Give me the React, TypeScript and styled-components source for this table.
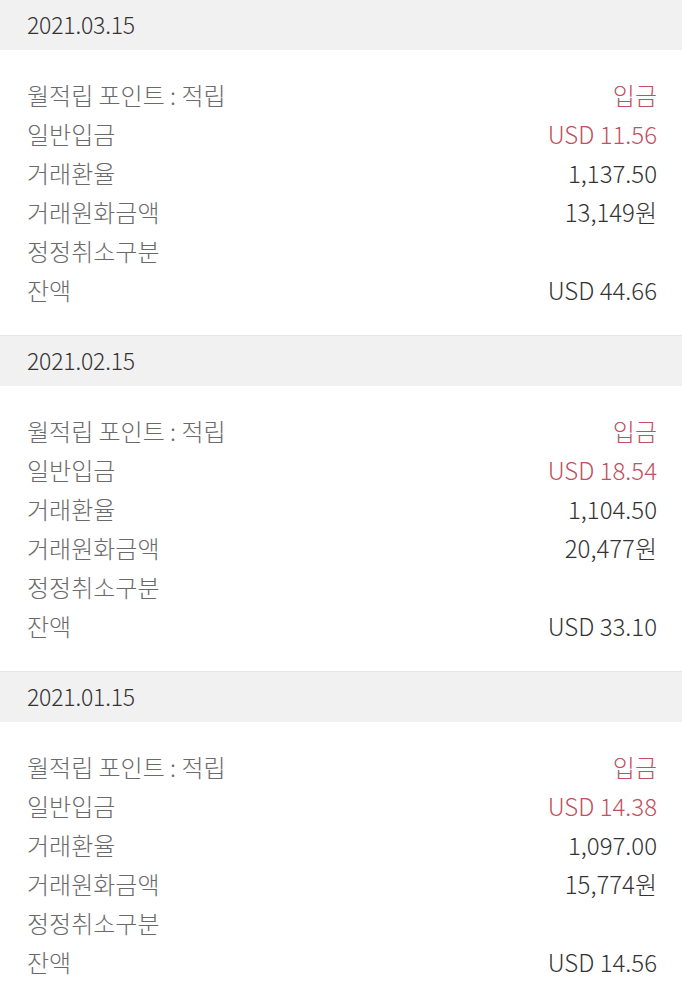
import React from "react";
import styled, { createGlobalStyle } from "styled-components";

const Global = createGlobalStyle`
  html, body { margin: 0; padding: 0; background: #ffffff; }
  body { font-family: "Noto Sans CJK KR", "Noto Sans", sans-serif; -webkit-font-smoothing: antialiased; }
`;

const List = styled.div`
  display: flex;
  flex-direction: column;
`;

const Section = styled.section<{ $first?: boolean }>`
  border-top: ${(p) => (p.$first ? "none" : "1px solid #e6e6e6")};
`;

const DateBar = styled.div`
  height: 50px;
  box-sizing: border-box;
  padding: 0 27px 3px;
  background: #f1f1f1;
  display: flex;
  align-items: center;
  font-size: 23px;
  font-weight: 300;
  color: #333333;
  letter-spacing: -0.2px;
`;

const Body = styled.div`
  padding: 25px 25px 26px 27px;
  display: flex;
  flex-direction: column;
`;

const Row = styled.div`
  height: 39px;
  display: flex;
  align-items: center;
  justify-content: space-between;
  font-size: 24px;
  font-weight: 300;
  letter-spacing: 0;
`;

const Label = styled.span`
  color: #6a6a6a;
`;

const Value = styled.span<{ $accent?: boolean }>`
  color: ${(p) => (p.$accent ? "#c0515f" : "#333333")};
`;

type Entry = {
  date: string;
  amount: string;
  rate: string;
  krw: string;
  balance: string;
};

const entries: Entry[] = [
  { date: "2021.03.15", amount: "USD 11.56", rate: "1,137.50", krw: "13,149원", balance: "USD 44.66" },
  { date: "2021.02.15", amount: "USD 18.54", rate: "1,104.50", krw: "20,477원", balance: "USD 33.10" },
  { date: "2021.01.15", amount: "USD 14.38", rate: "1,097.00", krw: "15,774원", balance: "USD 14.56" },
];

export default function App() {
  return (
    <>
      <Global />
      <List>
        {entries.map((e, i) => (
          <Section key={e.date} $first={i === 0}>
            <DateBar>{e.date}</DateBar>
            <Body>
              <Row>
                <Label>월적립 포인트 : 적립</Label>
                <Value $accent>입금</Value>
              </Row>
              <Row>
                <Label>일반입금</Label>
                <Value $accent>{e.amount}</Value>
              </Row>
              <Row>
                <Label>거래환율</Label>
                <Value>{e.rate}</Value>
              </Row>
              <Row>
                <Label>거래원화금액</Label>
                <Value>{e.krw}</Value>
              </Row>
              <Row>
                <Label>정정취소구분</Label>
                <Value></Value>
              </Row>
              <Row>
                <Label>잔액</Label>
                <Value>{e.balance}</Value>
              </Row>
            </Body>
          </Section>
        ))}
      </List>
    </>
  );
}
